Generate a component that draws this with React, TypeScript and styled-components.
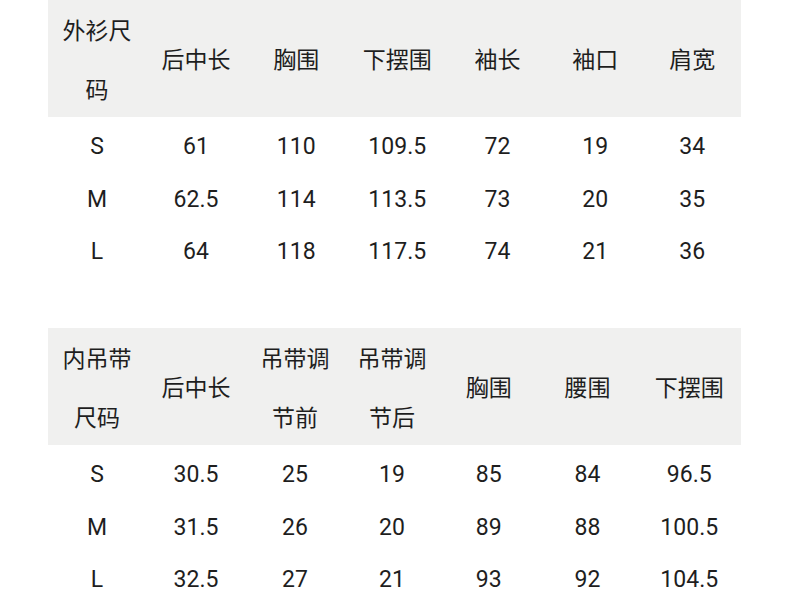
import React from "react";
import styled, { createGlobalStyle } from "styled-components";

const Global = createGlobalStyle`
  html, body { margin: 0; padding: 0; background: #ffffff; }
  body {
    font-family: Roboto, "Noto Sans CJK SC", "Noto Sans", sans-serif;
    color: #1e1e1e;
  }
`;

const Page = styled.div`
  width: 790px;
  height: 605px;
  overflow: hidden;
  padding: 0 49px 0 48px;
  box-sizing: border-box;
  display: flex;
  flex-direction: column;
  gap: 50px;
`;

const Table = styled.div<{ $cols: string }>`
  display: flex;
  flex-direction: column;
  --cols: ${(p) => p.$cols};
`;

const HeadRow = styled.div`
  display: grid;
  grid-template-columns: var(--cols);
  height: 117px;
  background: #f0f0ef;
  align-items: center;
`;

const HeadCell = styled.div`
  padding: 0 8px;
  text-align: center;
  font-family: "Noto Sans CJK SC", sans-serif;
  font-size: 23px;
  font-weight: 400;
  line-height: 58.5px;
  word-break: break-all;
`;

const Body = styled.div`
  padding-top: 3px;
  display: flex;
  flex-direction: column;
`;

const Row = styled.div`
  display: grid;
  grid-template-columns: var(--cols);
  height: 52.7px;
  align-items: center;
`;

const Cell = styled.div`
  text-align: center;
  font-size: 23px;
  font-weight: 400;
`;

type T = { cols: string; head: string[]; rows: string[][] };

const tables: T[] = [
  {
    cols: "98px 100px 100.5px 101.5px 99px 96.5px 97.5px",
    head: ["外衫尺码", "后中长", "胸围", "下摆围", "袖长", "袖口", "肩宽"],
    rows: [
      ["S", "61", "110", "109.5", "72", "19", "34"],
      ["M", "62.5", "114", "113.5", "73", "20", "35"],
      ["L", "64", "118", "117.5", "74", "21", "36"],
    ],
  },
  {
    cols: "98px 100px 98px 96px 97.5px 100px 103.5px",
    head: ["内吊带尺码", "后中长", "吊带调节前", "吊带调节后", "胸围", "腰围", "下摆围"],
    rows: [
      ["S", "30.5", "25", "19", "85", "84", "96.5"],
      ["M", "31.5", "26", "20", "89", "88", "100.5"],
      ["L", "32.5", "27", "21", "93", "92", "104.5"],
    ],
  },
];

export default function App() {
  return (
    <>
      <Global />
      <Page>
        {tables.map((t, i) => (
          <Table key={i} $cols={t.cols}>
            <HeadRow>
              {t.head.map((h, j) => (
                <HeadCell key={j}>{h}</HeadCell>
              ))}
            </HeadRow>
            <Body>
              {t.rows.map((r, k) => (
                <Row key={k}>
                  {r.map((c, j) => (
                    <Cell key={j}>{c}</Cell>
                  ))}
                </Row>
              ))}
            </Body>
          </Table>
        ))}
      </Page>
    </>
  );
}
